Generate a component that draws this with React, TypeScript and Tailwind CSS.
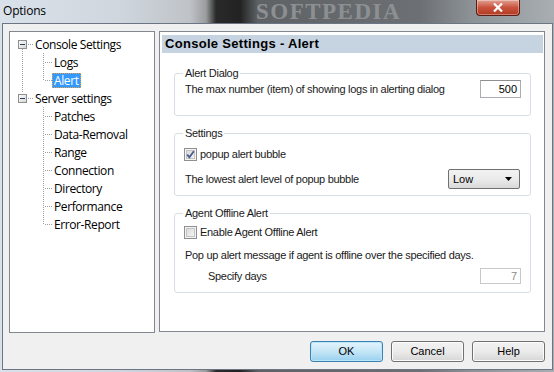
import React from 'react'

const ui = "font-['Liberation_Sans',Arial,sans-serif]"
const tree = "font-['Open_Sans','Noto_Sans',sans-serif]"

type Node = { label: string; kind: 'root' | 'rootLast' | 'child' | 'childLast' | 'childOnly' | 'childOnlyLast'; selected?: boolean }

const nodes: Node[] = [
  { label: 'Console Settings', kind: 'root' },
  { label: 'Logs', kind: 'child' },
  { label: 'Alert', kind: 'childLast', selected: true },
  { label: 'Server settings', kind: 'rootLast' },
  { label: 'Patches', kind: 'childOnly' },
  { label: 'Data-Removal', kind: 'childOnly' },
  { label: 'Range', kind: 'childOnly' },
  { label: 'Connection', kind: 'childOnly' },
  { label: 'Directory', kind: 'childOnly' },
  { label: 'Performance', kind: 'childOnly' },
  { label: 'Error-Report', kind: 'childOnlyLast' },
]

function Gutter({ kind }: { kind: Node['kind'] }) {
  const dot = { stroke: '#a0a0a0', strokeWidth: 1, strokeDasharray: '1 1', shapeRendering: 'crispEdges' as const }
  const isRoot = kind === 'root' || kind === 'rootLast'
  if (isRoot) {
    return (
      <svg width="23" height="18" className="shrink-0">
        {kind === 'rootLast' && <line x1="12.5" y1="0" x2="12.5" y2="4" {...dot} />}
        {kind === 'root' && <line x1="12.5" y1="14" x2="12.5" y2="18" {...dot} />}
        <line x1="18" y1="9.5" x2="23" y2="9.5" {...dot} />
        <defs>
          <linearGradient id="bx" x1="0" y1="0" x2="1" y2="1">
            <stop offset="0" stopColor="#ffffff" />
            <stop offset="1" stopColor="#d4d4d4" />
          </linearGradient>
        </defs>
        <rect x="8.5" y="5.5" width="8" height="8" fill="url(#bx)" stroke="#8f8f8f" shapeRendering="crispEdges" />
        <line x1="10" y1="9.5" x2="15" y2="9.5" stroke="#2a3f5f" strokeWidth="1" shapeRendering="crispEdges" />
      </svg>
    )
  }
  const outer = kind === 'child' || kind === 'childLast'
  const last = kind === 'childLast' || kind === 'childOnlyLast'
  return (
    <svg width="42" height="18" className="shrink-0">
      {outer && <line x1="12.5" y1="0" x2="12.5" y2="18" {...dot} />}
      <line x1="33.5" y1="0" x2="33.5" y2={last ? 9 : 18} {...dot} />
      <line x1="35" y1="9.5" x2="42" y2="9.5" {...dot} />
    </svg>
  )
}

function CheckBox({ checked }: { checked?: boolean }) {
  return (
    <svg width="13" height="13" className="shrink-0">
      <defs>
        <linearGradient id="cb" x1="0" y1="0" x2="1" y2="1">
          <stop offset="0" stopColor="#d9d9d9" />
          <stop offset="1" stopColor="#f6f6f6" />
        </linearGradient>
      </defs>
      <rect x="0.5" y="0.5" width="12" height="12" fill="#f4f4f4" stroke="#8e8f8f" shapeRendering="crispEdges" />
      <rect x="2.5" y="2.5" width="8" height="8" fill="url(#cb)" stroke="#c4c4c4" shapeRendering="crispEdges" />
      {checked && <path d="M3.2 6.6 L5.4 9.2 L9.8 3.2" fill="none" stroke="#4a5f8c" strokeWidth="1.9" />}
    </svg>
  )
}

function Group({ title, children, className }: { title: string; children: React.ReactNode; className?: string }) {
  return (
    <div className={`ml-[14px] w-[357px] border border-[#d5dfe5] rounded-[3px] ${className ?? ''}`}>
      <div className="-mt-[7px] ml-[8px] w-fit bg-white px-[2px] leading-[13px] text-[11px] tracking-[-0.3px] text-[#1a1a1a]">{title}</div>
      {children}
    </div>
  )
}

function Button({ label, focused }: { label: string; focused?: boolean }) {
  return (
    <div
      className={`w-[73px] h-[21px] flex items-center justify-center rounded-[3px] border text-[11px] text-black ${
        focused
          ? 'border-[#3c7fb1] bg-gradient-to-b from-[#e5f4fc] via-[#c4e5f6] to-[#98d1ef] shadow-[inset_0_0_0_1px_#b8e6fb]'
          : 'border-[#707070] bg-gradient-to-b from-[#f2f2f2] via-[#ebebeb] to-[#d6d6d6] shadow-[inset_0_0_0_1px_#fcfcfc]'
      }`}
    >
      {label}
    </div>
  )
}

const txt = 'text-[11px] tracking-[-0.3px] text-[#1a1a1a]'

export default function App() {
  return (
    <div
      className={`relative w-[554px] h-[372px] overflow-hidden ${ui} bg-[linear-gradient(90deg,#d9e1ea_0px,#cfd6de_120px,#bfc3c7_190px,#9a9c9e_206px,#2a2a2a_216px,#222_240px,#5e6265_258px,#6c7074_420px,#8c9196_470px,#a9aeb2_554px)]`}
    >
      {/* title bar */}
      <div className="h-[23px] flex items-start relative">
        <span className="pl-[3px] pt-[3px] text-[12px] leading-[16px] text-black font-['Open_Sans',sans-serif] tracking-[-0.2px]">Options</span>
        <span className="absolute left-[256px] top-0 text-[23px] leading-[23px] font-bold tracking-[1.5px] text-[#8d9093] font-['Liberation_Serif',serif]">
          SOFTPEDIA
        </span>
        <div className="ml-auto mr-[34px] w-[44px] h-[16px] rounded-b-[4px] border border-t-0 border-[#5c1d14] bg-gradient-to-b from-[#e0a092] via-[#c8523d] to-[#b23a22] flex items-center justify-center shadow-[inset_0_0_0_1px_rgba(255,255,255,0.35)]">
          <svg width="10" height="9" viewBox="0 0 10 9">
            <path d="M1 0.5 L9 8.5 M9 0.5 L1 8.5" stroke="#ffffff" strokeWidth="2.2" />
          </svg>
        </div>
      </div>

      {/* window frame */}
      <div className="relative ml-[2px] w-[551px] h-[347px] border border-[#6b7583] bg-[#f0f0f0] flex flex-col">
        <div className="flex gap-[4px] pl-[6px] pt-[7px]">
          {/* tree */}
          <div className={`w-[146px] h-[302px] border border-[#828790] bg-white pt-[3px] ${tree}`}>
            {nodes.map((n) => (
              <div key={n.label} className="flex items-center h-[18px]">
                <Gutter kind={n.kind} />
                <span
                  className={`px-[2px] h-[15px] flex items-center text-[12px] leading-[15px] tracking-[-0.4px] ${
                    n.selected
                      ? 'bg-[#3399ff] text-white outline-1 outline-dotted outline-[#e8a040] -outline-offset-1'
                      : 'text-black'
                  }`}
                >
                  {n.label}
                </span>
              </div>
            ))}
          </div>

          {/* right panel */}
          <div className="w-[386px] h-[301px] border border-[#828790] bg-white">
            <div className="ml-[2px] mt-[3px] w-[381px] h-[18px] bg-[#c6d3e0] flex items-center pl-[3px]">
              <span className="text-[13px] font-bold text-black leading-[18px] tracking-[0.3px]">Console Settings - Alert</span>
            </div>

            <Group title="Alert Dialog" className="mt-[20px] pb-[17px]">
              <div className="flex items-center h-[18px] pl-[10px] pr-[9px]">
                <span className={txt}>The max number (item) of showing logs in alerting dialog</span>
                <div className="ml-auto w-[41px] h-[18px] border border-[#abadb3] border-t-[#8e8f8f] bg-white text-[11px] text-black text-right pr-[3px] leading-[16px]">
                  500
                </div>
              </div>
            </Group>

            <Group title="Settings" className="mt-[17px] pb-[6px]">
              <div className="flex items-center gap-[3px] h-[13px] mt-[8px] pl-[9px]">
                <CheckBox checked />
                <span className={txt}>popup alert bubble</span>
              </div>
              <div className="flex items-center h-[20px] mt-[8px] pl-[10px] pr-[10px]">
                <span className={txt}>The lowest alert level of popup bubble</span>
                <div className="ml-auto w-[72px] h-[20px] rounded-[2px] border border-[#707070] bg-gradient-to-b from-[#f2f2f2] via-[#ebebeb] to-[#d9d9d9] flex items-center pl-[4px] pr-[7px]">
                  <span className="text-[11px] text-black">Low</span>
                  <svg width="7" height="4" className="ml-auto">
                    <path d="M0 0 L7 0 L3.5 4 Z" fill="#000" />
                  </svg>
                </div>
              </div>
            </Group>

            <Group title="Agent Offline Alert" className="mt-[17px] pb-[8px]">
              <div className="flex items-center gap-[3px] h-[13px] mt-[6px] pl-[9px]">
                <CheckBox />
                <span className={txt}>Enable Agent Offline Alert</span>
              </div>
              <div className="h-[13px] mt-[10px] pl-[10px] flex items-center">
                <span className={txt}>Pop up alert message if agent is offline over the specified days.</span>
              </div>
              <div className="flex items-center h-[16px] mt-[6px] pl-[33px] pr-[9px]">
                <span className={txt}>Specify days</span>
                <div className="ml-auto w-[41px] h-[16px] border border-[#c9c9c9] bg-white text-[11px] text-[#8a8a8a] text-right pr-[3px] leading-[14px]">
                  7
                </div>
              </div>
            </Group>
          </div>
        </div>

        {/* buttons */}
        <div className="flex justify-end gap-[8px] mt-[8px] pr-[7px]">
          <Button label="OK" focused />
          <Button label="Cancel" />
          <Button label="Help" />
        </div>
      </div>
    </div>
  )
}
